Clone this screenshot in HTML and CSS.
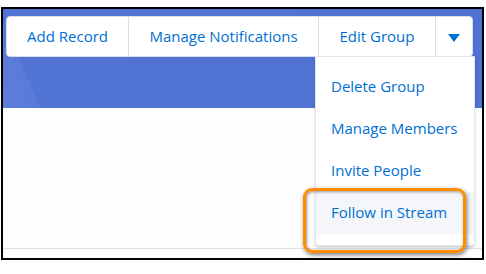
FILE: index.html
```html
<!DOCTYPE html>
<html>
  <head>
    <title>Group Actions</title>
    <link rel="stylesheet" href="styles.css">
  </head>
  <body>
    <div class="frame">
      <div class="header">
        <div class="button-group">
          <button class="btn btn-add">Add Record</button>
          <button class="btn btn-notify">Manage Notifications</button>
          <button class="btn btn-edit">Edit Group</button>
          <button class="btn btn-more">
            <svg width="12" height="8" viewBox="0 0 12 8"><path d="M0 0 L12 0 L6 8 Z" fill="#0070d2"/></svg>
          </button>
        </div>
      </div>

      <div class="content">
        <div class="footer-line"></div>
      </div>

      <ul class="menu">
        <li>Delete Group</li>
        <li>Manage Members</li>
        <li>Invite People</li>
        <li class="active">Follow in Stream</li>
      </ul>

      <div class="callout"></div>
    </div>
  </body>
</html>
```

FILE: styles.css
```css
html, body {
    margin: 0;
    background: #fff;
}

body {
    padding: 7px 0 0 1px;

    font-family: "Open Sans", sans-serif;
}

.frame {
    position: relative;
    box-sizing: border-box;
    width: 483px;
    height: 253px;

    display: flex;
    flex-direction: column;

    border: 2px solid #000;

    background: #fdfdfd;
}

.header {
    height: 99px;
    padding: 7px 9px 0 3px;
    box-sizing: border-box;

    background: linear-gradient(67deg, #5c7dd9 0%, #5a7bd8 7%, #5274d4 7.2%, #4e71d3 100%);
}

.button-group {
    display: flex;
    height: 39px;

    border: 1px solid #d8dde6;
    border-radius: 4px;

    background: #fff;
}

.btn {
    padding: 0 0 2px;
    margin: 0;

    border: none;
    border-left: 1px solid #d8dde6;

    font-family: "Open Sans", sans-serif;
    font-size: 15px;
    color: #0070d2;

    background: transparent;
}

.btn-add {
    width: 121px;
    border-left: none;
}

.btn-notify {
    width: 190px;
}

.btn-edit {
    width: 117px;
}

.btn-more {
    flex: 1;
    display: flex;
    justify-content: center;
    align-items: center;
    padding: 2px 0 0;
}

.content {
    flex: 1;
    display: flex;
    flex-direction: column;
    justify-content: flex-end;
    padding-bottom: 9px;
}

.footer-line {
    height: 1px;
    background: #dfe1ec;
}

.menu {
    position: absolute;
    left: 312px;
    top: 47px;
    width: 158px;
    margin: 0;
    padding: 9px 0 11px;

    list-style: none;

    border: 1px solid #e3e6ec;
    border-radius: 0 0 4px 4px;

    background: #fff;
    box-shadow: 0 2px 3px rgba(0, 0, 0, 0.16);
}

.menu li {
    height: 42px;
    padding: 0 0 2px 15px;
    box-sizing: border-box;

    display: flex;
    align-items: center;

    font-size: 15px;
    color: #0070d2;
}

.menu li.active {
    background: #f4f6f9;
}

.callout {
    position: absolute;
    left: 300px;
    top: 179px;
    width: 157px;
    height: 59px;

    border: 3px solid #ff8c00;
    border-radius: 9px;

    box-shadow: 1px 2px 4px rgba(0, 0, 0, 0.5), inset 1px 1px 3px rgba(0, 0, 0, 0.4);
}
```
